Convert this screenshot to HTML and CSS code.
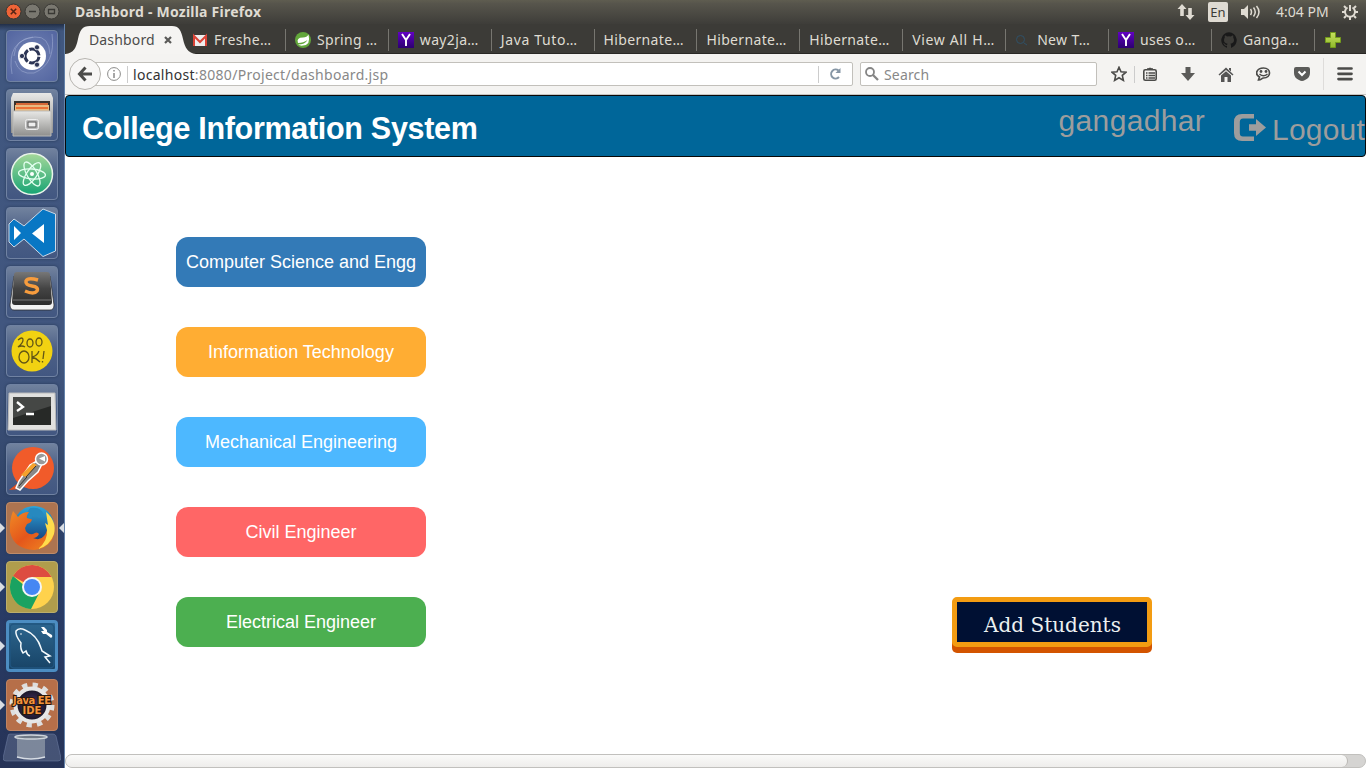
FILE: index.html
```
<!DOCTYPE html>
<html lang="en">
<head>
<meta charset="utf-8">
<title>Dashbord</title>
<link rel="stylesheet" href="styles.css">
</head>
<body>
<svg class="defs" width="0" height="0">
  <defs>
    <linearGradient id="steel" x2="0" y2="1"><stop stop-color="#e8e8e6"/><stop offset="1" stop-color="#8f8f8d"/></linearGradient>
    <linearGradient id="dark" x2="0" y2="1"><stop stop-color="#777"/><stop offset=".5" stop-color="#444"/><stop offset="1" stop-color="#2c2c2c"/></linearGradient>
    <linearGradient id="atom" x2="0" y2="1"><stop stop-color="#a5d89a"/><stop offset="1" stop-color="#17a474"/></linearGradient>
    <linearGradient id="fire" x1="0" y1="0" x2="1" y2="1"><stop stop-color="#f08a25"/><stop offset=".5" stop-color="#e4561b"/><stop offset="1" stop-color="#f08a22"/></linearGradient>
    <linearGradient id="fox" x2="0" y2="1"><stop stop-color="#2ca6dc"/><stop offset="1" stop-color="#14336f"/></linearGradient>
    <linearGradient id="plus" x2="0" y2="1"><stop stop-color="#c7e05e"/><stop offset="1" stop-color="#8fb82c"/></linearGradient>
    <linearGradient id="yahoo" x2="0" y2="1"><stop stop-color="#6200c4"/><stop offset="1" stop-color="#2c0070"/></linearGradient>
    <radialGradient id="eclipse"><stop stop-color="#4a3470"/><stop offset="1" stop-color="#151420"/></radialGradient>
  </defs>
</svg>

<header class="panel">
  <svg class="controls" width="60" height="24" viewBox="0 0 60 24">
    <circle cx="13.500" cy="11.500" r="7.500" fill="#ef6437" stroke="#373632"/><path d="M10.800 8.800l5.400 5.400m0-5.400l-5.400 5.400" stroke="#552515" stroke-width="1.600"/>
    <circle cx="32.500" cy="11.500" r="7.500" fill="#7a7870" stroke="#3a3935"/><path d="M29 11.500h7" stroke="#393834" stroke-width="1.500"/>
    <circle cx="51.500" cy="11.500" r="7.500" fill="#7a7870" stroke="#3a3935"/><path d="M48.500 9.500h6v4h-6z" fill="none" stroke="#393834" stroke-width="1.300"/>
  </svg>
  <span class="window-title">Dashbord - Mozilla Firefox</span>
  <div class="indicators">
    <svg width="18" height="18" viewBox="0 0 18 18" fill="#dfdbd2"><path d="M5 1l4.500 5H6.800v7H3.200V6H.5zM13 17l-4.500-5h2.700V5h3.600v7h2.700z"/></svg>
    <span class="lang">En</span>
    <svg class="volume" width="20" height="16" viewBox="0 0 20 16"><path d="M0 5h3l4-4v14l-4-4H0z" fill="#dfdbd2"/><g fill="none" stroke="#dfdbd2" stroke-width="1.500"><path d="M9.500 5q2 3 0 6M12.500 3.500q3.500 4.500 0 9M15.500 2q5 6 0 12"/></g></svg>
    <span class="clock">4:04 PM</span>
    <svg class="gear" width="16" height="16" viewBox="0 0 16 16" fill="none" stroke="#dfdbd2"><path d="M5.500 3.500a5 5 0 1 0 5 0" stroke-width="2"/><path d="M8 1v6" stroke-width="2"/><path d="M2 2l2 2M14 2l-2 2M0 8h3m10 0h3M2 14l2-2m10 2l-2-2M8 13v3" stroke-width="2"/></svg>
  </div>
</header>

<div class="desktop">
  <nav class="launcher">
    <div class="tile ubuntu"><svg viewBox="0 0 52 52"><g fill="none" stroke="#aab5da" stroke-opacity=".5"><path d="M6 44Q0 10 29 7q14-1 15 17M46 4q4 30-18 39-15 2-19-12M8 26Q9 9 27 7"/></g><circle cx="26" cy="26" r="14" fill="#fff"/><circle cx="26" cy="26" r="7" fill="none" stroke="#2c3555" stroke-width="3" stroke-dasharray="13 1.660" stroke-dashoffset="-.8"/><g fill="#2c3555" stroke="#fff" stroke-width=".8"><circle cx="16" cy="26" r="2.600"/><circle cx="31" cy="17.300" r="2.600"/><circle cx="31" cy="34.700" r="2.600"/></g></svg></div>
    <div class="tile"><svg viewBox="0 0 52 52"><path d="M7 4h38l2 5v35H5V9z" fill="url(#steel)"/><path d="M8 12h36v10H8z" fill="#39322e"/><path d="M10 14h32v8H10z" fill="#d76837"/><path d="M9 16h34v6H9z" fill="#e9bb82"/><path d="M10 19h32" stroke="#ed7338" stroke-width="2"/><path d="M7 22h38v25H7z" fill="url(#steel)" stroke="#b9b9b7"/><rect x="19.500" y="30.500" width="13" height="10" rx="2" fill="#bbb" stroke="#eee"/><rect x="22" y="33" width="8" height="5" fill="#eee" stroke="#555"/></svg></div>
    <div class="tile"><svg viewBox="0 0 52 52"><circle cx="26" cy="26" r="20.500" fill="url(#atom)" stroke="#e9f4ea" stroke-width="1.500"/><g fill="none" stroke="#e4fff0" stroke-width="1.300"><ellipse cx="26" cy="26" rx="5" ry="13.500" transform="rotate(-30 26 26)"/><ellipse cx="26" cy="26" rx="5" ry="13.500" transform="rotate(35 26 26)"/><ellipse cx="26" cy="26" rx="5" ry="13.500" transform="rotate(95 26 26)"/></g><circle cx="26" cy="26" r="2" fill="#fff"/></svg></div>
    <div class="tile"><svg viewBox="0 0 52 52"><path d="M37 2l12.500 5v37L37 49.500 18 32l-10 8-5-5V17l5-5 10 7z" fill="#0877c4" stroke="#cbd9e8"/><path d="M8 19v14l7-7zM38 17v19L26 26.500z" fill="#fff"/></svg></div>
    <div class="tile"><svg viewBox="0 0 52 52"><path d="M8 10h36l4 29q0 5-4 5H8q-4 0-4-5z" fill="#f2f2f2" stroke="#222" stroke-width=".7"/><path d="M8 9q0-3 3-3h30q3 0 3 3l2 27q0 3-3 3H9q-3 0-3-3z" fill="url(#dark)"/><path d="M7 34h38" fill="none" stroke="#777"/><path d="M32 14q-10-3-12 1-1 4 6 5 7 1 5 5-3 4-12 0" fill="none" stroke="#f79c3d" stroke-width="3.500"/></svg></div>
    <div class="tile"><svg viewBox="0 0 52 52"><circle cx="26" cy="26" r="20.500" fill="#f1d212"/><g fill="none" stroke="#625615" stroke-width="1.300"><path d="M12 15q5-4 5 0 0 3-5 7 4-2 7 0"/><ellipse cx="24" cy="18" rx="3" ry="4"/><ellipse cx="33" cy="17" rx="3" ry="4"/><ellipse cx="18" cy="32" rx="5" ry="6"/><path d="M26 26v12m7-12q-2 5-7 6 4 1 8 5M38 26l-1 8m-.5 2v1.500"/></g></svg></div>
    <div class="tile"><svg viewBox="0 0 52 52"><path d="M3 9h46l1 37H2z" fill="#e1e1df" stroke="#bbb"/><path d="M7 13h38v28H7z" fill="#272927"/><path d="M7 13h38v9L7 34z" fill="#454745"/><path d="M11 18l6 5-6 4m9 3h8" fill="none" stroke="#fff" stroke-width="2.300"/></svg></div>
    <div class="tile"><svg viewBox="0 0 52 52"><circle cx="27" cy="25" r="21" fill="#f15b2a"/><path d="M3 47l13-10-2 9z" fill="#e54f1e"/><path d="M31 18l-7 4-11 16-3 7 4 2 8-9 10-9 4-8z" fill="#888" stroke="#fff" stroke-width="1.500"/><path d="M27 20L15 32l5 2 11-12z" fill="#f5a12c"/><circle cx="35.500" cy="16" r="6" fill="#999" stroke="#fff" stroke-width="1.500"/><path d="M39 13l-6 2.500 6 3z" fill="#fff"/><path d="M20 34l10-11M13 43l8-9" stroke="#333"/></svg></div>
    <div class="tile firefox active running"><svg viewBox="0 0 52 52"><circle cx="28" cy="24" r="20" fill="url(#fox)"/><path d="M24 6q11-2 14 7l-5 3-6-3-2 4-6-3z" fill="#2789bf"/><path d="M7 9l5 6q4-5 11-5-3 4-2 6l5 1.500q-1 3.500-5 4.500l-2 4q1 7 8 6 4-3 6 0-2 4-6 4 7 3 11-2 4-5 3-10l6-3q3 9-1 17-6 9-18 10Q8 47 4 30 3 19 7 9z" fill="url(#fire)"/><path d="M40 10q11 9 8 22-4 12-16 15 10-8 9-19l-2-7 3 2z" fill="#ffdc4c"/></svg></div>
    <div class="tile chrome running"><svg viewBox="0 0 52 52"><circle cx="26" cy="26" r="22" fill="#ffd24c"/><path d="M26 26L6.950 15A22 22 0 0 1 45.600 16H26z" fill="#dd4c40"/><path d="M6.950 15A22 22 0 0 0 25 48l8.700-17H26z" fill="#1aa261"/><circle cx="26" cy="26" r="10" fill="#f4f5f5"/><circle cx="26" cy="26" r="8" fill="#4587f3"/></svg></div>
    <div class="tile mysql running"><svg viewBox="0 0 52 52"><rect x="4" y="4" width="44" height="44" rx="4" fill="none" stroke="#205580" stroke-width="1.500"/><path d="M24 36q-3-1-4-5l-3 2q-3-4-2-10-6-8-5-12 3-4 9-1 12 5 16 18l1 3 8 5-5 1 5 6" fill="none" stroke="#f3f9fc" stroke-width="1.500"/><circle cx="15" cy="14" r=".8" fill="#fff"/><path d="M35 7l3 0 3 3 0 2 5 3q1 2-1 3l-5-4-3 0-2-3 3 0z" fill="#fff"/></svg></div>
    <div class="tile java running"><svg viewBox="0 0 52 52"><circle cx="26" cy="26" r="20" fill="none" stroke="#dedede" stroke-width="5" stroke-dasharray="5.200 5.270"/><circle cx="26" cy="26" r="16.500" fill="url(#eclipse)" stroke="#e6e6e6" stroke-width="4"/><text class="java-label" x="26" y="25" textLength="38">Java EE</text><text class="java-label" x="26" y="35">IDE</text></svg></div>
    <svg class="trash" viewBox="0 0 58 30" width="58" height="30"><path d="M7 1h43q2 0 3 2l5 22q0 3-3 3H3q-3 0-3-3L5 3q0-2 2-2z" fill="#8290ad" fill-opacity=".35" stroke="#7384a9" stroke-opacity=".5"/><path d="M14 4v20q13 4 28 0V4" fill="#aab2b9" fill-opacity=".55"/><ellipse cx="28" cy="4" rx="16" ry="2" fill="#6f7986" stroke="#ced5dc" stroke-width="1.500"/><path d="M14 24q14 4 28 0" fill="none" stroke="#d6dce4" stroke-width="1.500"/></svg>
  </nav>

  <main class="browser">
    <div class="tabs">
      <div class="active-tab">
        <svg class="tab-shape" width="132" height="30" viewBox="0 0 132 30"><path d="M0 30C9 29 11 24 13 15 15 6 17 2 25 2h82c7 0 9 4 11 13 2 9 5 14 13 15z" fill="#f5f4f2"/></svg>
        <div class="active-content"><span>Dashbord</span><svg width="8" height="8" viewBox="0 0 8 8"><path d="M1 1l6 6m0-6L1 7" stroke="#5a5a58" stroke-width="2.200"/></svg></div>
      </div>
      <div class="tab"><svg class="favicon" viewBox="0 0 16 16"><path d="M1 3h14v11H1z" fill="#eee"/><path d="M2 14V4l6 6 6-6v10" fill="none" stroke="#db4437" stroke-width="2"/></svg><span>Freshe…</span></div>
      <div class="tab"><svg class="favicon" viewBox="0 0 16 16"><circle cx="8" cy="8" r="8" fill="#62a63b"/><path d="M13.500 2.500Q16 13 8 13.500q-3 .5-5-1 7 0 9.500-4.500-4 3-9.500 3Q1 5.500 8 5.500q4 0 5.500-3z" fill="#fff"/></svg><span>Spring …</span></div>
      <div class="tab"><svg class="favicon" viewBox="0 0 16 16"><path d="M0 0h16v16H0z" fill="url(#yahoo)"/><path d="M4 2l4 6 4-6M8 8v6" fill="none" stroke="#fff" stroke-width="1.900"/></svg><span>way2ja…</span></div>
      <div class="tab"><span class="wide">Java Tuto…</span></div>
      <div class="tab"><span>Hibernate…</span></div>
      <div class="tab"><span>Hibernate…</span></div>
      <div class="tab"><span>Hibernate…</span></div>
      <div class="tab"><span class="wide">View All H…</span></div>
      <div class="tab"><svg class="favicon" viewBox="0 0 16 16"><circle cx="5.500" cy="7.500" r="4" fill="none" stroke="#2f5168"/><path d="M9 11l3 2" stroke="#2f5168"/></svg><span>New T…</span></div>
      <div class="tab"><svg class="favicon" viewBox="0 0 16 16"><path d="M0 0h16v16H0z" fill="url(#yahoo)"/><path d="M4 2l4 6 4-6M8 8v6" fill="none" stroke="#fff" stroke-width="1.900"/></svg><span>uses o…</span></div>
      <div class="tab"><svg class="favicon" viewBox="0 0 16 16"><path d="M8 .2a8 8 0 0 0-2.500 15.500c.4 0 .5-.2.500-.4v-1.500c-2 .4-2.700-1-2.900-1.500-.3-.4-.6-.8-1-.9.9-.5 1.700.4 2 .9.700 1 1.500.8 2 .6 0-.5.300-.9.500-1.100C4 11.500 3 10 3 8c0-1 .3-1.800.8-2.200-.2-.6-.1-1.600.1-2.200 1 0 1.700.6 2.200.9a8 8 0 0 1 3.800 0c.5-.3 1.200-.9 2.200-.9.200.6.300 1.600.1 2.200.5.400.8 1.200.8 2.200 0 2-1 3.500-3.600 3.800.4.300.6.900.6 1.600v2c0 .2.100.4.500.3A8 8 0 0 0 8 .2z" fill="#191919"/></svg><span>Ganga…</span></div>
      <div class="new-tab"><svg width="16" height="16" viewBox="0 0 16 16"><path d="M5.500.5h5v5h5v5h-5v5h-5v-5h-5v-5h5z" fill="url(#plus)" stroke="#739a1b"/></svg></div>
    </div>

    <div class="toolbar">
      <div class="address">
        <div class="back"><svg width="16" height="16" viewBox="0 0 16 16"><path d="M15 8H3m5.500-6.500L2.500 8l6 6.500" fill="none" stroke="#4b4b49" stroke-width="3"/></svg></div>
        <svg class="info" width="14" height="14" viewBox="0 0 14 14"><circle cx="7" cy="7" r="6.400" fill="none" stroke="#8b8b89"/><path d="M7 6v5M7 3v1.500" stroke="#777" stroke-width="1.300"/></svg>
        <i class="sep"></i>
        <span class="url"><b>localhost</b>:8080/Project/dashboard.jsp</span>
        <i class="sep reload-sep"></i>
        <svg class="reload" width="12" height="12" viewBox="0 0 12 12"><path d="M9.500 2.500A4.500 4.500 0 1 0 10 9" fill="none" stroke="#8696a5" stroke-width="2"/><path d="M11.500 0v5h-5z" fill="#8696a5"/></svg>
      </div>
      <div class="search"><svg width="14" height="14" viewBox="0 0 14 14"><circle cx="5" cy="5" r="4" fill="none" stroke="#858585" stroke-width="1.800"/><path d="M8 8l5 5" stroke="#858585" stroke-width="2.300"/></svg><span>Search</span></div>
      <div class="tools">
        <svg class="star" width="16" height="16" viewBox="0 0 16 16"><path d="M8 1.300l2 4.500 5 .4-3.700 3.200 1.100 5L8 11.800l-4.400 2.600 1.100-5L1 6.200l5-.4z" fill="none" stroke="#4b4b49" stroke-width="1.600"/></svg>
        <i class="sep star-sep"></i>
        <svg class="clip" width="14" height="14" viewBox="0 0 14 14"><rect x=".8" y="2.800" width="12.400" height="10.400" rx="1.500" fill="none" stroke="#4b4b49" stroke-width="1.600"/><path d="M4 2h6M3 6h1.500m1 0H12M3 8.500h1.500m1 0H12M3 11h1.500m1 0H12" stroke="#4b4b49" stroke-width="1.300"/><path d="M5 2q2-3 4 0" fill="#4b4b49"/></svg>
        <svg class="download" width="14" height="14" viewBox="0 0 14 14"><path d="M4.500 0h5v6H14l-7 8-7-8h4.500z" fill="#5b5b59"/></svg>
        <svg class="home" width="16" height="15" viewBox="0 0 16 15"><path d="M8 .5l7.500 7-1 1L8 3 1.500 8.500l-1-1z" fill="#555"/><path d="M3 8.500l5-4.200 5 4.200V15h-3.500v-5h-3v5H3zM11 1h2v3.500l-2-1.800z" fill="#555"/></svg>
        <svg class="chat" width="15" height="14" viewBox="0 0 15 14"><path d="M7.500 1c8 0 8 10 0 10-2 0-2 2-5 2l1-3C-2 7 1 1 7.500 1z" fill="none" stroke="#4b4b49" stroke-width="1.700"/><path d="M3.500 7q4 3.500 8 0" fill="none" stroke="#4b4b49" stroke-width="1.500"/><circle cx="5" cy="4.500" r="1.400" fill="#4b4b49"/><circle cx="10" cy="4.500" r="1.400" fill="#4b4b49"/></svg>
        <svg class="pocket" width="16" height="14" viewBox="0 0 16 14"><path d="M2 0h12q2 0 2 2v4q0 5-5 7-3 2-6 0-5-2-5-7V2q0-2 2-2z" fill="#5b5b59"/><path d="M4.500 4.500L8 8l3.500-3.500" fill="none" stroke="#fff" stroke-width="2"/></svg>
        <i class="sep menu-sep"></i>
        <svg class="menu" width="16" height="14" viewBox="0 0 16 14"><path d="M1.500 1.500h13m-13 5.300h13m-13 5.300h13" stroke="#4b4b49" stroke-width="2.700" stroke-linecap="round"/></svg>
      </div>
    </div>

    <section class="page">
      <header class="site-header">
        <h1>College Information System</h1>
        <div class="account">
          <span class="user">gangadhar</span>
          <span class="logout"><svg width="32" height="27" viewBox="0 0 32 27"><path d="M20 0v4.500H9Q5.800 4.500 5.800 8v11q0 3.500 3.200 3.500h11V27H8q-8 0-8-8V8q0-8 8-8zM15 10.300h7V5l10 8.500L22 22v-5.200h-7z" fill="#9d9d9d"/></svg><span>Logout</span></span>
        </div>
      </header>
      <div class="dashboard">
        <div class="departments">
          <button class="dept cse">Computer Science and Engg</button>
          <button class="dept it">Information Technology</button>
          <button class="dept mech">Mechanical Engineering</button>
          <button class="dept civil">Civil Engineer</button>
          <button class="dept electrical">Electrical Engineer</button>
        </div>
        <button class="add-students">Add Students</button>
      </div>
      <div class="scrollbar"><div class="thumb"></div></div>
    </section>
  </main>
</div>
</body>
</html>
```
FILE: styles.css
```
* { box-sizing: border-box; }
body { margin: 0; width: 1366px; height: 768px; overflow: hidden; font: 14px "Noto Sans", sans-serif; background: #fff; }
svg { display: block; flex: none; }
.defs { position: absolute; }
button { border: 0; padding: 0; margin: 0; }

.panel { height: 24px; display: flex; align-items: center; color: #dfdbd2; background: linear-gradient(#5f5d50, #57554c 15%, #3e3d39); }
.window-title { margin-left: 15px; width: 187px; padding-bottom: 1px; white-space: nowrap; font-weight: 700; font-size: 14px; letter-spacing: .23px; }
.indicators { display: flex; align-items: center; margin-left: auto; padding-right: 8px; }
.lang { width: 20px; height: 20px; margin-left: 13px; border-radius: 2px; background: #dfdbd2; color: #3c3b37; font-size: 13px; line-height: 21px; text-align: center; }
.volume { margin-left: 13px; }
.clock { width: 53px; margin-left: 15px; padding-bottom: 1px; white-space: nowrap; }
.gear { margin-left: 13px; }

.desktop { display: flex; height: 744px; }
.launcher { width: 65px; flex: none; display: flex; flex-direction: column; align-items: flex-start; gap: 7px; padding: 6px 0 0 6px; border-right: 1px solid #6482aa; background: linear-gradient(#222f48 0, #40577f 7px, #41567f 45%, #33476c 60%, #293d68 75%, #263357); }
.tile { position: relative; width: 52px; height: 52px; flex: none; border-radius: 4px; border: 1px solid #7082a2; background: linear-gradient(#71829e, #4d6187 45%, #425781); box-shadow: 0 0 3px #263958; }
.tile > svg { width: 52px; height: 52px; margin: -1px; }
.ubuntu { background: radial-gradient(#7283b4, #5365a0); }
.firefox { background: #ad7450; border-color: #bf8b69; }
.chrome { background: #b09d4c; border-color: #bcae6b; }
.mysql { background: linear-gradient(#2d668f, #184467); border: 3px solid #4c8dc2; }
.mysql > svg { margin: -3px; }
.java { background: #b66f49; border-color: #bf8463; }
.running::before { content: ""; position: absolute; left: -7px; top: 20px; border: 5px solid transparent; border-left-color: #d9dde3; border-right: 0; }
.mysql::before { left: -9px; top: 18px; }
.active::after { content: ""; position: absolute; right: -7px; top: 20px; border: 5px solid transparent; border-right-color: #d9dde3; border-left: 0; }
.java-label { font: bold 10px "DejaVu Sans", sans-serif; fill: #f3933b; stroke: #29180e; stroke-width: 2px; paint-order: stroke; text-anchor: middle; }
.trash { margin: -5px 0 0 -3px; }

.browser { width: 1301px; display: flex; flex-direction: column; }
.tabs { height: 30px; display: flex; background: #3c3b37; color: #dfdbd2; box-shadow: inset 0 -1px #292825; }
.active-tab { width: 118px; position: relative; color: #4c4c4c; }
.tab-shape { position: absolute; left: 0; top: 0; }
.active-content { position: relative; display: flex; align-items: center; gap: 9px; height: 32px; padding-left: 24px; }
.active-content span { width: 66px; padding-bottom: 2px; letter-spacing: .15px; }
.tab { width: 102.9px; height: 22px; margin-top: 5px; display: flex; align-items: center; gap: 6px; padding-left: 9px; border-right: 1px solid #777670; white-space: nowrap; position: relative; }
.tab span { letter-spacing: .35px; padding-bottom: 2px; }
.tab .wide { letter-spacing: .65px; }
.favicon { width: 16px; height: 16px; }
.new-tab { padding: 8px 0 0 10px; }

.toolbar { height: 41px; display: flex; align-items: center; background: #f4f3f1; border-bottom: 1px solid #c6c5c2; padding-left: 20px; color: #888; }
.address { width: 768px; height: 24px; display: flex; align-items: center; border: 1px solid #c2c0bb; border-radius: 2px; background: #fff; }
.back { width: 32px; height: 32px; margin-left: -17px; flex: none; border: 1px solid #b7b5b0; border-radius: 50%; background: #f7f6f5; display: grid; place-items: center; }
.info { margin-left: 6px; }
.sep { width: 1px; height: 17px; background: #ccc; margin-left: 6px; flex: none; }
.url { margin-left: 5px; white-space: nowrap; letter-spacing: .3px; }
.url b { color: #333; font-weight: 400; }
.reload-sep { margin-left: auto; }
.reload { margin: 0 11px 0 10px; }
.search { width: 237px; height: 24px; display: flex; align-items: center; gap: 5px; margin-left: 7px; padding-left: 4px; border: 1px solid #c2c0bb; border-radius: 2px; background: #fff; letter-spacing: .15px; }
.tools { display: flex; align-items: center; flex: 1; }
.star { margin-left: 14px; }
.star-sep { margin-left: 7px; }
.clip { margin-left: 8px; }
.download { margin-left: 24px; }
.home { margin-left: 23px; }
.chat { margin-left: 22px; }
.pocket { margin-left: 23px; }
.menu-sep { height: 32px; margin-left: 13px; background: #dedcda; }
.menu { margin-left: 13px; }

.page { flex: 1; display: flex; flex-direction: column; background: #fff; font-family: "Liberation Sans", Arial, sans-serif; }
.site-header { height: 62px; display: flex; justify-content: space-between; border: 1px solid #080808; border-radius: 4px; background: #006699; overflow: hidden; }
h1 { margin: 0; padding-left: 16px; color: #fff; font-size: 30.500px; line-height: 64px; letter-spacing: -.3px; white-space: nowrap; }
.account { display: flex; color: #9d9d9d; font-size: 30px; line-height: 34px; }
.user { padding-top: 8px; letter-spacing: .33px; }
.logout { display: flex; gap: 6px; margin-left: 29px; padding-top: 17px; letter-spacing: .2px; }
.logout svg { margin-top: 1px; }
.dashboard { flex: 1; display: flex; justify-content: space-between; align-items: flex-start; padding: 80px 214px 0 111px; }
.departments { display: flex; flex-direction: column; gap: 40px; }
.dept { width: 250px; height: 50px; border-radius: 12px; color: #fff; font: 18px "Liberation Sans", Arial, sans-serif; }
.cse { background: #337ab7; }
.it { background: #ffad33; }
.mech { background: #4db8ff; }
.civil { background: #ff6666; }
.electrical { background: #4caf50; }
.add-students { width: 200px; height: 50px; margin-top: 360px; padding: 5px 0 0 1px; border: 5px solid #f39c12; border-radius: 5px; background: #001033; box-shadow: 0 6px #d35400; color: #ecf0f1; font: 20px "DejaVu Serif", serif; }
.scrollbar { height: 14px; border: 1px solid #c1c0bd; border-radius: 8px; background: #d5d4d2; }
.thumb { width: 1282px; height: 12px; border-right: 1px solid #bbb9b5; border-radius: 8px; background: linear-gradient(#fafaf9, #eeedeb); }
```
